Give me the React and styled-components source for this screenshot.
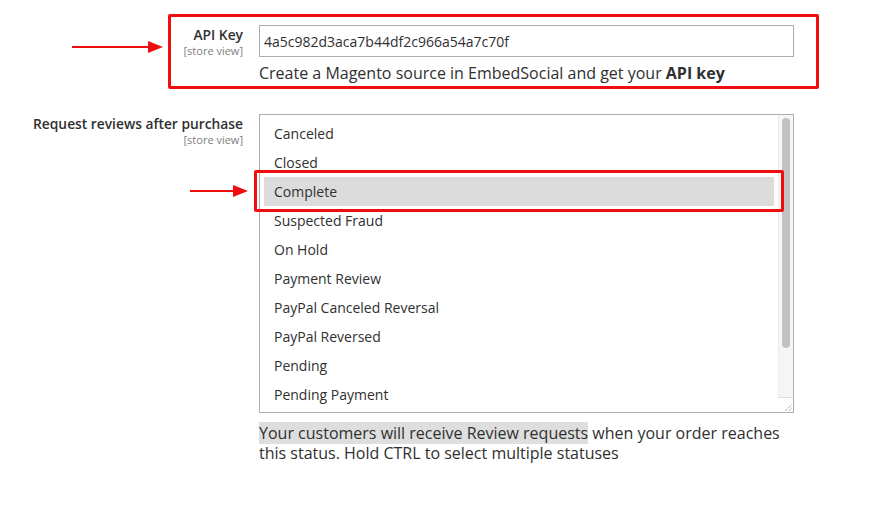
import React from "react";
import styled, { createGlobalStyle } from "styled-components";

const Global = createGlobalStyle`
  html, body { margin: 0; padding: 0; background: #fff; }
  * { box-sizing: border-box; }
`;

const RED = "#f00d0d";

const Page = styled.div`
  position: relative;
  width: 873px;
  height: 531px;
  padding-top: 25px;
  background: #fff;
  color: #303030;
  font-family: "Open Sans", "Liberation Sans", sans-serif;
`;

const Field = styled.div`
  display: grid;
  grid-template-columns: 243px 535px;
  column-gap: 16px;
  margin-bottom: ${(p) => p.$mb || 0}px;
`;

const Label = styled.div`
  text-align: right;
  padding-top: 1px;
`;

const LabelText = styled.div`
  font-size: 13.8px;
  font-weight: 600;
  line-height: 18px;
`;

const Scope = styled.div`
  font-size: 11px;
  line-height: 13px;
  color: #808080;
`;

const Control = styled.div`
  display: flex;
  flex-direction: column;
`;

const TextInput = styled.input`
  width: 100%;
  height: 32px;
  border: 1px solid #adadad;
  border-radius: 0;
  padding: 0 4px;
  font: 14px "Open Sans", "Liberation Sans", sans-serif;
  color: #303030;
  outline: none;
`;

const Note = styled.div`
  margin-top: ${(p) => p.$mt}px;
  max-width: ${(p) => p.$maxw || 535}px;
  font-size: 16px;
  line-height: 20px;
  color: #303030;
`;

const Mark = styled.span`
  background: #dedede;
`;

const ListBox = styled.div`
  height: 299px;
  border: 1px solid #adadad;
  display: grid;
  grid-template-columns: 1fr 15px;
  column-gap: 4px;
  overflow: hidden;
`;

const Options = styled.div`
  padding: 4px 0 0 4px;
  overflow: hidden;
`;

const Option = styled.div`
  height: 29px;
  line-height: 29px;
  padding-left: 10px;
  font-size: 14px;
  white-space: nowrap;
  background: ${(p) => (p.$selected ? "#dcdcdc" : "transparent")};
`;

const Scrollbar = styled.div`
  display: flex;
  flex-direction: column;
`;

const Track = styled.div`
  flex: 1;
  background: #f6f6f6;
  border-left: 1px solid #ececec;
  padding: 3px 0 0 3px;
`;

const Thumb = styled.div`
  width: 8px;
  height: 230px;
  border-radius: 4px;
  background: #c2c2c2;
`;

const Corner = styled.div`
  height: 15px;
  border-top: 1px solid #dddddd;
  display: flex;
  align-items: flex-end;
  justify-content: flex-end;
  padding: 0 1px 1px 0;
`;

const Annotation = styled.div`
  position: absolute;
  left: ${(p) => p.$x}px;
  top: ${(p) => p.$y}px;
  width: ${(p) => p.$w}px;
  height: ${(p) => p.$h}px;
  border: 3px solid ${RED};
  border-radius: 2px;
  pointer-events: none;
`;

const ArrowWrap = styled.svg`
  position: absolute;
  left: ${(p) => p.$x}px;
  top: ${(p) => p.$y}px;
  overflow: visible;
`;

function Arrow({ x, y, len }) {
  return (
    <ArrowWrap $x={x} $y={y - 7} width={len} height={14}>
      <line x1="0" y1="7" x2={len - 12} y2="7" stroke={RED} strokeWidth="2.2" />
      <polygon points={`${len - 15},1 ${len},7 ${len - 15},13`} fill={RED} />
    </ArrowWrap>
  );
}

const statuses = [
  "Canceled",
  "Closed",
  "Complete",
  "Suspected Fraud",
  "On Hold",
  "Payment Review",
  "PayPal Canceled Reversal",
  "PayPal Reversed",
  "Pending",
  "Pending Payment",
  "Processing",
];

export default function App() {
  return (
    <>
      <Global />
      <Page>
        <Field $mb={31}>
          <Label>
            <LabelText>API Key</LabelText>
            <Scope>[store view]</Scope>
          </Label>
          <Control>
            <TextInput readOnly defaultValue="4a5c982d3aca7b44df2c966a54a7c70f" />
            <Note $mt={6}>
              Create a Magento source in EmbedSocial and get your <b>API key</b>
            </Note>
          </Control>
        </Field>
        <Field>
          <Label>
            <LabelText>Request reviews after purchase</LabelText>
            <Scope>[store view]</Scope>
          </Label>
          <Control>
            <ListBox role="listbox">
              <Options>
                {statuses.map((s) => (
                  <Option key={s} $selected={s === "Complete"}>
                    {s}
                  </Option>
                ))}
              </Options>
              <Scrollbar>
                <Track>
                  <Thumb />
                </Track>
                <Corner>
                  <svg width="8" height="8" viewBox="0 0 8 8">
                    <line x1="1" y1="8" x2="8" y2="1" stroke="#777" strokeWidth="0.9" strokeDasharray="1 1" />
                    <line x1="4.5" y1="8" x2="8" y2="4.5" stroke="#777" strokeWidth="0.9" strokeDasharray="1 1" />
                  </svg>
                </Corner>
              </Scrollbar>
            </ListBox>
            <Note $mt={10} $maxw={522}>
              <Mark>Your customers will receive Review requests</Mark> when your order reaches this
              status. Hold CTRL to select multiple statuses
            </Note>
          </Control>
        </Field>

        <Annotation $x={168} $y={14} $w={651} $h={75} />
        <Annotation $x={254} $y={170} $w={530} $h={42} />
        <Arrow x={72} y={47} len={91} />
        <Arrow x={190} y={191} len={58} />
      </Page>
    </>
  );
}
